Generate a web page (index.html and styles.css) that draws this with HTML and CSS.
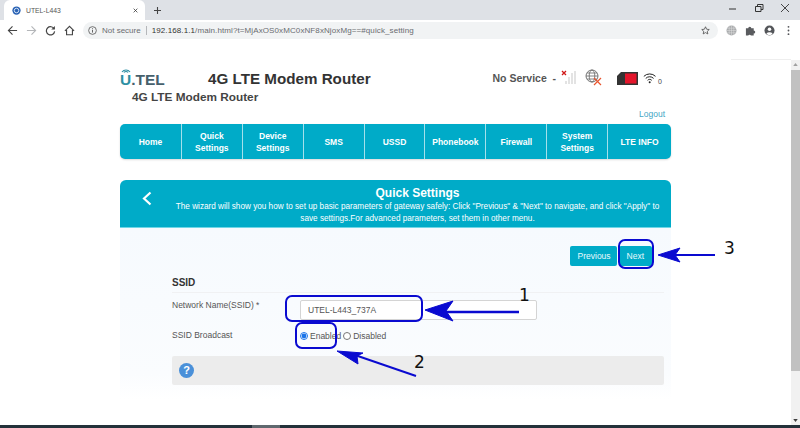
FILE: index.html
```html
<!DOCTYPE html>
<html lang="en">
<head>
<meta charset="utf-8"/>
<title>UTEL-L443</title>
<link rel="stylesheet" href="styles.css">
</head>
<body>
<div class="tabstrip">
    <div class="tab">
        <svg class="favicon" viewBox="0 0 12 12"><circle cx="6" cy="6" r="5.5" fill="#2a62b4"/><circle cx="6" cy="6" r="3" fill="none" stroke="#d5e4f5" stroke-width="1.3"/></svg>
        <span class="tab-title">UTEL-L443</span>
        <svg class="tab-close" viewBox="0 0 8 8"><path d="M1 1l6 6M7 1L1 7" stroke="#333" stroke-width="1.2"/></svg>
    </div>
    <svg class="new-tab" viewBox="0 0 9 9"><path d="M4.5 0v9M0 4.500h9" stroke="#444" stroke-width="1.4"/></svg>
    <div class="window-btns">
        <svg viewBox="0 0 10 10"><path d="M1 6h7" stroke="#333" stroke-width="1"/></svg>
        <svg viewBox="0 0 10 10"><path d="M1.500 3.500h5.500v5h-5.500zM3.500 3.500v-2h5.500v5h-2" fill="none" stroke="#333" stroke-width="1"/></svg>
        <svg viewBox="0 0 10 10"><path d="M1 1l8 8M9 1l-8 8" stroke="#333" stroke-width="0.9"/></svg>
    </div>
</div>
<div class="toolbar">
    <svg class="tool" viewBox="0 0 12 12"><path d="M11 6H2M6 1.500L1.500 6 6 10.500" fill="none" stroke="#444" stroke-width="1.200"/></svg>
    <svg class="tool" viewBox="0 0 12 12"><path d="M1 6h9M6 1.500L10.500 6 6 10.500" fill="none" stroke="#b4b6b9" stroke-width="1.200"/></svg>
    <svg class="tool" viewBox="0 0 12 12"><path d="M10 4.200A4.500 4.500 0 1 0 10.500 7" fill="none" stroke="#444" stroke-width="1.300"/><path d="M10.800 1v4h-4z" fill="#444"/></svg>
    <svg class="tool" viewBox="0 0 12 12"><path d="M1 6.500L6 1.500l5 5M2.800 5.500v5.200h6.400V5.500" fill="none" stroke="#444" stroke-width="1.200"/></svg>
    <div class="omnibox">
        <svg class="info-icon" viewBox="0 0 10 10"><circle cx="5" cy="5" r="4.300" fill="none" stroke="#555" stroke-width="0.9"/><path d="M5 4.300v3M5 2.500v1" stroke="#555"/></svg>
        <span class="not-secure">Not secure</span>
        <span class="url">192.168.1.1<span class="url-rest">/main.html?t=MjAxOS0xMC0xNF8xNjoxMg==#quick_setting</span></span>
        <svg class="star" viewBox="0 0 12 12"><path d="M6 1l1.500 3.300 3.500.4-2.600 2.400.7 3.500L6 8.800l-3.100 1.800.7-3.500L1 4.700l3.500-.4z" fill="none" stroke="#444" stroke-width="1"/></svg>
    </div>
    <div class="extensions">
        <svg viewBox="0 0 12 12"><circle cx="6" cy="6" r="5.500" fill="#a9abad"/><path d="M.5 6h11M6 .5v11M3.500 1v10M8.500 1v10M1 3.500h10M1 8.500h10" stroke="#e4e4e4" stroke-width="0.5"/></svg>
        <svg viewBox="0 0 12 12"><path d="M1 3.500h2.500a1.700 1.700 0 0 1 3.400 0H9.500V6a1.700 1.700 0 0 1 0 3.400V11.500H6.500a1.700 1.700 0 0 0-3 0H1z" fill="#5a5c5f"/></svg>
        <svg viewBox="0 0 12 12"><circle cx="6" cy="6" r="5.500" fill="#54565a"/><circle cx="6" cy="4.600" r="1.900" fill="#fff"/><path d="M2.600 9.500a3.800 2.800 0 0 1 6.800 0 4.500 4.500 0 0 1-6.800 0z" fill="#fff"/></svg>
        <svg viewBox="0 0 12 12"><circle cx="6" cy="2" r="1" fill="#54565a"/><circle cx="6" cy="6" r="1" fill="#54565a"/><circle cx="6" cy="10" r="1" fill="#54565a"/></svg>
    </div>
</div>

<div class="viewport">
    <main class="page">
        <header class="site-head">
            <div class="brand-line">
                <span class="logo">
                    <svg class="logo-arcs" viewBox="0 0 10 6"><path d="M1 5a5 5 0 0 1 8 0M3 5.500a2.500 2.500 0 0 1 4 0" fill="none" stroke="#2e8fa3" stroke-width="1.200"/></svg>
                    <span class="logo-u">U</span>.TEL
                </span>
                <h1>4G LTE Modem Router</h1>
                <div class="status">
                    <span class="status-text">No Service&nbsp; -</span>
                    <svg class="signal" viewBox="0 0 16 16"><path d="M5 14v-3M8 14V7M11 14V3M14 14V1" stroke="#d4d4d4" stroke-width="1.300"/><path d="M1 1l4 4M5 1L1 5" stroke="#d01818" stroke-width="1.300"/></svg>
                    <svg class="globe" viewBox="0 0 18 18"><circle cx="7" cy="7" r="6" fill="none" stroke="#666" stroke-width="0.9"/><ellipse cx="7" cy="7" rx="2.800" ry="6" fill="none" stroke="#666" stroke-width="0.8"/><path d="M1 7h12M2 4h10M2 10h10" stroke="#666" stroke-width="0.8"/><path d="M9 9l7 7M16 9l-7 7" stroke="#e8552e" stroke-width="1.200"/></svg>
                    <svg class="sim" viewBox="0 0 21 13"><path d="M4 0h17v13H0V4z" fill="#333"/><rect x="8" y="1.500" width="11.500" height="10" fill="#e4152b"/></svg>
                    <svg class="wifi" viewBox="0 0 18 13"><path d="M1 4.500a10 10 0 0 1 14 0M3.300 7a6.500 6.500 0 0 1 9.400 0M5.500 9.300a3.300 3.300 0 0 1 5 0" fill="none" stroke="#222" stroke-width="1.200"/><circle cx="8" cy="11.500" r="1.200" fill="#222"/></svg>
                    <span class="wifi-count">0</span>
                </div>
            </div>
            <div class="subtitle">4G LTE Modem Router</div>
            <div class="logout-row"><a href="#">Logout</a></div>
        </header>

        <nav class="main-nav">
            <a href="#">Home</a>
            <a href="#">Quick<br>Settings</a>
            <a href="#">Device<br>Settings</a>
            <a href="#">SMS</a>
            <a href="#">USSD</a>
            <a href="#">Phonebook</a>
            <a href="#">Firewall</a>
            <a href="#">System<br>Settings</a>
            <a href="#">LTE INFO</a>
        </nav>

        <section class="wizard-head">
            <svg class="back-arrow" viewBox="0 0 10 14"><path d="M8.500 1L2 7l6.500 6" fill="none" stroke="#fff" stroke-width="2.200"/></svg>
            <h2>Quick Settings</h2>
            <p>The wizard will show you how to set up basic parameters of gateway safely: Click "Previous" &amp; "Next" to navigate, and click "Apply" to save settings.For advanced parameters, set them in other menu.</p>
        </section>

        <section class="wizard-body">
            <div class="wizard-btns">
                <button>Previous</button>
                <button>Next</button>
            </div>
            <h3>SSID</h3>
            <div class="form-row">
                <label>Network Name(SSID) *</label>
                <input type="text" value="UTEL-L443_737A"/>
            </div>
            <div class="form-row radio-row">
                <label>SSID Broadcast</label>
                <div class="radios">
                    <input type="radio" name="bc" checked/><span>Enabled</span>
                    <input type="radio" name="bc"/><span>Disabled</span>
                </div>
            </div>
            <div class="help-box">
                <span class="help-icon">?</span>
            </div>
        </section>
    </main>
    <div class="scrollbar">
        <svg class="scroll-arrow" viewBox="0 0 6 4"><path d="M0 4h6L3 0z" fill="#a0a0a0"/></svg>
        <div class="thumb"></div>
        <svg class="scroll-arrow" viewBox="0 0 6 4"><path d="M0 0h6L3 4z" fill="#404040"/></svg>
    </div>
</div>
<div class="taskbar"><span class="task-item"></span></div>

<!-- Blue annotations drawn over the screenshot -->
<svg class="annotations" width="800" height="428" viewBox="0 0 800 428">
    <g fill="none" stroke="#0a0ad0" stroke-width="2">
        <rect x="286" y="296" width="136" height="25" rx="6"/>
        <rect x="296" y="323" width="40" height="25" rx="6"/>
        <rect x="619" y="240" width="34" height="28" rx="6"/>
    </g>
    <g fill="#0a0ad0" stroke="#0a0ad0">
        <path d="M519 312H440" stroke-width="2.500"/>
        <path d="M425 310l28-9-7 10 7 10z"/>
        <path d="M416 376L352 354" stroke-width="2"/>
        <path d="M337 351l26 2-6 3 1 8z"/>
        <path d="M715 255H670" stroke-width="2"/>
        <path d="M658 255l22-7-5 7 5 7z"/>
    </g>
    <text x="519" y="301" class="note">1</text>
    <text x="414" y="368" class="note">2</text>
    <text x="724" y="254" class="note">3</text>
</svg>
</body>
</html>
```

FILE: styles.css
```css
html, body {
    margin: 0;
    height: 428px;
    overflow: hidden;
    background: #fff;
    font-family: "Liberation Sans", Arial, sans-serif;
    color: #444;
}
body {
    display: flex;
    flex-direction: column;
    position: relative;
}

/* Browser chrome */
.tabstrip {
    height: 20px;
    flex: none;
    background: #dee1e6;
    display: flex;
    align-items: center;
    padding-left: 4px;
}
.tab {
    width: 141px;
    height: 20px;
    box-sizing: border-box;
    background: #fff;
    border-radius: 6px 6px 0 0;
    display: flex;
    align-items: center;
    padding: 0 7px 0 8px;
}
.favicon {
    width: 9px;
    height: 9px;
    margin-right: 5px;
}
.tab-title {
    font-size: 6.800px;
    flex: 1;
    color: #555;
}
.tab-close {
    width: 5px;
    height: 5px;
}
.new-tab {
    width: 7px;
    height: 7px;
    margin-left: 9px;
}
.window-btns {
    margin-left: auto;
    display: flex;
    gap: 16px;
    padding-right: 10px;
    height: 20px;
    align-items: flex-start;
    padding-top: 3px;
    box-sizing: border-box;
}
.window-btns svg {
    width: 10px;
    height: 10px;
}
.toolbar {
    height: 20px;
    flex: none;
    display: flex;
    align-items: center;
    padding-left: 7px;
}
.tool {
    width: 11px;
    height: 11px;
    margin-right: 8px;
}
.omnibox {
    width: 635px;
    height: 17px;
    background: #f1f3f4;
    border-radius: 9px;
    display: flex;
    align-items: center;
    padding: 0 8px 0 5px;
    box-sizing: border-box;
}
.info-icon {
    width: 9px;
    height: 9px;
    margin-right: 5px;
}
.not-secure {
    font-size: 8px;
    color: #6a6c70;
    padding-right: 5px;
    border-right: 1px solid #b5b7ba;
    margin-right: 5px;
    line-height: 9px;
}
.url {
    font-size: 8px;
    color: #333;
    flex: 1;
    letter-spacing: 0.1px;
}
.url-rest {
    color: #6a6c70;
}
.star {
    width: 9px;
    height: 9px;
}
.extensions {
    display: flex;
    gap: 8px;
    margin-left: 8px;
}
.extensions svg {
    width: 11px;
    height: 11px;
}

/* Page */
.viewport {
    flex: 1;
    min-height: 0;
    display: flex;
}
.page {
    flex: 1;
    padding: 28px 120px 0;
    box-sizing: border-box;
    min-width: 0;
    overflow: hidden;
}
.site-head {
    height: 56px;
}
.brand-line {
    display: flex;
    align-items: center;
    height: 20px;
}
.logo {
    position: relative;
    font-size: 15.500px;
    font-weight: bold;
    color: #46606c;
    width: 88px;
    flex: none;
    margin-top: 3px;
}
.logo-u {
    color: #2e8fa3;
}
.logo-arcs {
    position: absolute;
    left: 1px;
    top: -4px;
    width: 10px;
    height: 6px;
}
h1 {
    margin: 0;
    font-size: 15.200px;
    color: #333;
    white-space: nowrap;
}
.status {
    margin-left: auto;
    display: flex;
    align-items: center;
    padding-right: 9px;
}
.status-text {
    font-size: 10.500px;
    font-weight: bold;
    color: #555;
    margin-right: 5px;
}
.signal {
    width: 16px;
    height: 16px;
    margin-right: 8px;
}
.globe {
    width: 18px;
    height: 18px;
    margin-right: 14px;
}
.sim {
    width: 21px;
    height: 13px;
    margin-right: 5px;
}
.wifi {
    width: 15px;
    height: 12px;
}
.wifi-count {
    font-size: 7px;
    align-self: flex-end;
    margin-bottom: 2px;
}
.subtitle {
    font-size: 11.800px;
    line-height: 14px;
    font-weight: bold;
    color: #444;
    padding-left: 12px;
    margin-top: 2px;
}
.logout-row {
    text-align: right;
    margin-top: 2px;
    margin-right: 6px;
    line-height: 12px;
}
.logout-row a {
    font-size: 8.500px;
    color: #3fa6c4;
    text-decoration: none;
}
.main-nav {
    display: grid;
    grid-template-columns: repeat(8, 60.900px) 1fr;
    height: 35px;
    background: #00abc8;
    border-radius: 5px;
    box-shadow: 0 1px 2px rgba(0,0,0,0.15);
}
.main-nav a {
    display: flex;
    align-items: center;
    justify-content: center;
    text-align: center;
    color: #fff;
    font-size: 8.500px;
    font-weight: bold;
    line-height: 12px;
    text-decoration: none;
    border-left: 1px solid #a5e0eb;
}
.main-nav a:first-child {
    border-left: none;
}
.wizard-head {
    position: relative;
    margin-top: 21px;
    height: 48px;
    box-sizing: border-box;
    background: #00abc8;
    border-bottom: 1px solid #6fd6e6;
    border-radius: 6px 6px 0 0;
    color: #fff;
    text-align: center;
    padding: 6px 8px 0 52px;
}
.back-arrow {
    position: absolute;
    left: 22px;
    top: 11px;
    width: 10px;
    height: 15px;
}
.wizard-head h2 {
    margin: 0;
    font-size: 12px;
    line-height: 14px;
}
.wizard-head p {
    margin: 1px 0 0;
    font-size: 8.200px;
    line-height: 12px;
}
.wizard-body {
    background: linear-gradient(#f6fafe, #fafcfe 85%, #fff);
    height: 172px;
    box-sizing: border-box;
    padding: 18px 7px 0 52px;
}
.wizard-btns {
    display: flex;
    justify-content: flex-end;
    gap: 2px;
    padding-right: 12px;
}
.wizard-btns button {
    height: 20px;
    border: none;
    border-radius: 2px;
    background: #00abc8;
    color: #e8fafd;
    font-family: inherit;
    font-size: 8.500px;
    padding: 0 8px;
}
.wizard-btns button:first-child {
    width: 47px;
}
h3 {
    margin: 11px 0 0;
    font-size: 10px;
    line-height: 12px;
    color: #333;
    padding-bottom: 3px;
    border-bottom: 1px solid #f0f1f3;
}
.form-row {
    display: flex;
    height: 20px;
    margin-top: 7px;
}
.form-row label {
    width: 128px;
    font-size: 8.500px;
    line-height: 11px;
    color: #555;
}
.form-row input[type="text"] {
    width: 237px;
    height: 20px;
    box-sizing: border-box;
    border: 1px solid #d4d4d4;
    border-radius: 2px;
    background: #fff;
    color: #555;
    font-family: inherit;
    font-size: 8.500px;
    padding: 0 7px;
    outline: none;
}
.radio-row {
    height: 26px;
    margin-top: 10px;
}
.radios {
    display: flex;
    align-items: flex-start;
    font-size: 8.500px;
    color: #555;
    line-height: 12px;
}
.radios input {
    width: 8px;
    height: 8px;
    margin: 2px 2px 0 0;
    accent-color: #1a73e8;
}
.radios span {
    margin-right: 2px;
}
.help-box {
    height: 29px;
    background: #ececec;
    border-radius: 2px;
    display: flex;
    align-items: center;
    padding-left: 7px;
}
.help-icon {
    width: 15px;
    height: 15px;
    border-radius: 50%;
    background: #4a90d9;
    color: #fff;
    font-size: 11px;
    font-weight: bold;
    text-align: center;
    line-height: 15px;
}
.scrollbar {
    position: relative;
    width: 9px;
    flex: none;
    margin-top: 20px;
    background: #f1f1f1;
    display: flex;
    flex-direction: column;
    padding: 3px 0;
    box-sizing: border-box;
    align-items: center;
}
.scrollbar::before {
    content: "";
    position: absolute;
    right: 9px;
    top: -1px;
    width: 60px;
    height: 1px;
    background: #eeeeee;
}
.thumb {
    width: 100%;
    height: 301px;
    margin: 4px 0 auto;
    background: #c1c1c1;
}
.scroll-arrow {
    width: 5px;
    height: 3px;
    flex: none;
}
.taskbar {
    height: 3px;
    flex: none;
    background: #23313a;
}
.task-item {
    display: block;
    width: 28px;
    height: 3px;
    margin-left: 252px;
    background: #5f686e;
}

/* Annotations over the page */
.annotations {
    position: absolute;
    left: 0;
    top: 0;
    pointer-events: none;
}
.note {
    font-family: "DejaVu Sans", sans-serif;
    font-size: 17px;
    fill: #111;
}
```
